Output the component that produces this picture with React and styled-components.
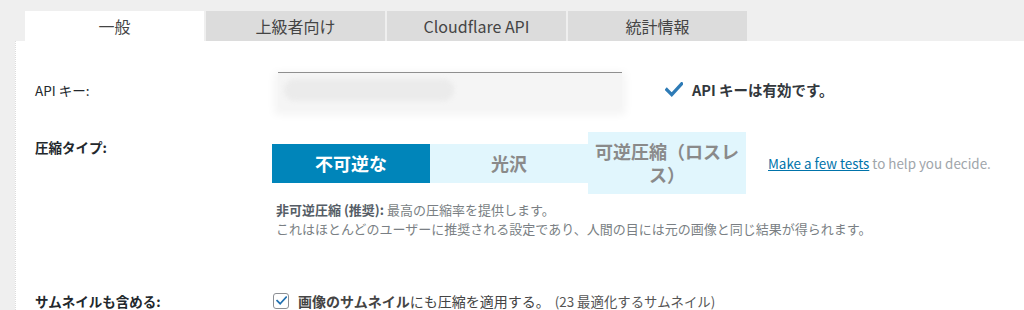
import React, { useState } from "react";
import styled, { createGlobalStyle } from "styled-components";

const GlobalStyle = createGlobalStyle`
  html, body {
    margin: 0;
    padding: 0;
    background: #efefef;
    font-family: "Noto Sans CJK JP", "Noto Sans", sans-serif;
    color: #23282d;
  }
`;

const Page = styled.div`
  padding-top: 11px;
  height: 310px;
  box-sizing: border-box;
  overflow: hidden;
`;

const TabBar = styled.div`
  display: flex;
  gap: 2px;
  margin-left: 25px;
`;

const Tab = styled.div`
  width: 179px;
  height: 30px;
  display: flex;
  align-items: center;
  justify-content: center;
  font-size: 16px;
  color: #444;
  background: ${(p) => (p.$active ? "#fff" : "#dcdcdc")};
  cursor: pointer;
`;

const Panel = styled.div`
  margin-left: 15px;
  background: #fff;
  border-left: 1px dotted #dcdcdc;
  padding: 31px 0 0 19px;
  height: 300px;
`;

const Row = styled.div`
  display: grid;
  grid-template-columns: 237px 1fr;
  align-items: ${(p) => p.$align || "start"};
  margin-bottom: ${(p) => p.$gap || 0}px;
`;

const Label = styled.div`
  font-size: 13.5px;
  font-weight: ${(p) => (p.$bold ? 700 : 400)};
  color: #23282d;
  padding-top: ${(p) => p.$top || 0}px;
`;

const Value = styled.div`
  display: flex;
  flex-direction: column;
`;

const KeyLine = styled.div`
  display: flex;
  align-items: center;
`;

const MaskedInput = styled.div`
  width: 344px;
  height: 34px;
  margin-left: 6px;
  border-top: 1px solid #8f8f8f;
  background: #f5f5f5;
  box-shadow: 0 4px 8px 4px #f5f5f5;
  display: flex;
  align-items: center;
`;

const Smudge = styled.div`
  width: 170px;
  height: 22px;
  margin-left: 6px;
  border-radius: 11px;
  background: #ebebeb;
  filter: blur(2px);
`;

const Valid = styled.div`
  display: flex;
  align-items: center;
  gap: 9px;
  margin-left: 43px;
  font-size: 14.5px;
  font-weight: 700;
  color: #32373c;
`;

const Modes = styled.div`
  display: flex;
  align-items: center;
`;

const ModeButton = styled.div`
  width: 158px;
  box-sizing: border-box;
  padding: 8px 6px;
  line-height: 23px;
  font-size: 18px;
  font-weight: 700;
  text-align: center;
  background: ${(p) => (p.$active ? "#0085ba" : "#e1f6fd")};
  color: ${(p) => (p.$active ? "#fff" : "#8a8a8a")};
  cursor: pointer;
`;

const Hint = styled.div`
  margin-left: 22px;
  font-size: 13.4px;
  color: #a0a5aa;

  a {
    color: #0073aa;
    text-decoration: underline;
  }
`;

const Description = styled.div`
  margin-top: 6px;
  margin-left: 4px;
  font-size: 13px;
  line-height: 19px;
  color: #7a7f84;

  b {
    color: #555d66;
  }
`;

const CheckLine = styled.label`
  display: flex;
  align-items: center;
  margin-left: 1px;
  font-size: 14px;
  color: #444;
`;

const Box = styled.span`
  width: 16px;
  height: 16px;
  box-sizing: border-box;
  border: 1px solid #8c8f94;
  border-radius: 3px;
  background: #fff;
  display: flex;
  align-items: center;
  justify-content: center;
  margin-right: 9px;
`;

const Count = styled.span`
  margin-left: 5px;
  font-size: 13.4px;
  color: #555;
`;

function Tick({ size = 18, color = "#2e7bb6", width = 3.6 }) {
  return (
    <svg width={size} height={size * 0.85} viewBox="0 0 20 17">
      <path d="M2 8.5 L7.5 14 L18.5 2" fill="none" stroke={color} strokeWidth={width} strokeLinecap="square" />
    </svg>
  );
}

const tabs = ["一般", "上級者向け", "Cloudflare API", "統計情報"];
const modes = ["不可逆な", "光沢", "可逆圧縮（ロスレス）"];

export default function App() {
  const [tab, setTab] = useState(0);
  const [mode, setMode] = useState(0);

  return (
    <>
      <GlobalStyle />
      <Page>
        <TabBar>
          {tabs.map((t, i) => (
            <Tab key={t} $active={tab === i} onClick={() => setTab(i)}>
              {t}
            </Tab>
          ))}
        </TabBar>
        <Panel>
          <Row $align="center" $gap={25}>
            <Label>API キー:</Label>
            <KeyLine>
              <MaskedInput>
                <Smudge />
              </MaskedInput>
              <Valid>
                <Tick />
                API キーは有効です。
              </Valid>
            </KeyLine>
          </Row>

          <Row $gap={53}>
            <Label $bold $top={5}>圧縮タイプ:</Label>
            <Value>
              <Modes>
                {modes.map((m, i) => (
                  <ModeButton key={m} $active={mode === i} onClick={() => setMode(i)}>
                    {m}
                  </ModeButton>
                ))}
                <Hint>
                  <a href="#">Make a few tests</a> to help you decide.
                </Hint>
              </Modes>
              <Description>
                <b>非可逆圧縮 (推奨):</b> 最高の圧縮率を提供します。
                <br />
                これはほとんどのユーザーに推奨される設定であり、人間の目には元の画像と同じ結果が得られます。
              </Description>
            </Value>
          </Row>

          <Row $align="center">
            <Label $bold>サムネイルも含める:</Label>
            <CheckLine>
              <Box>
                <Tick size={11} color="#2271b1" width={3} />
              </Box>
              <b>画像のサムネイル</b>にも圧縮を適用する。
              <Count>(23 最適化するサムネイル)</Count>
            </CheckLine>
          </Row>
        </Panel>
      </Page>
    </>
  );
}
